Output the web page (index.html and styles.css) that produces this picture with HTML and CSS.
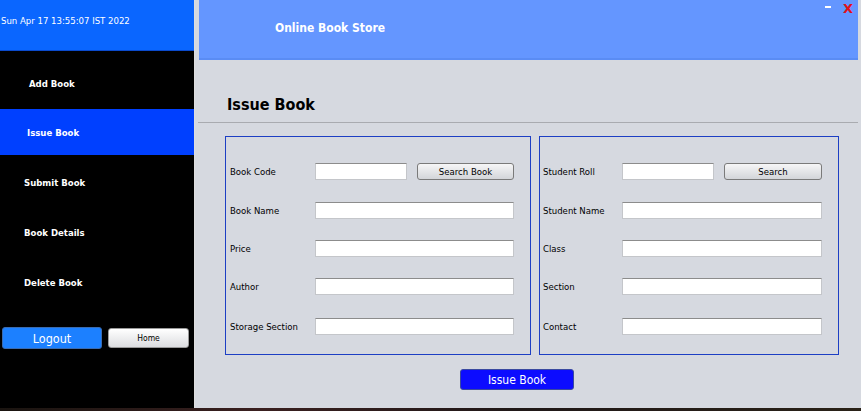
FILE: index.html
```html
<!DOCTYPE html>
<html>
<head>
<meta charset="utf-8">
<link rel="stylesheet" href="styles.css">
</head>
<body>
<div class="app">
  <aside class="sidebar">
    <div class="date">Sun Apr 17 13:55:07 IST 2022</div>
    <nav class="nav">
      <div class="nav-item first">Add Book</div>
      <div class="nav-item active">Issue Book</div>
      <div class="nav-item">Submit Book</div>
      <div class="nav-item">Book Details</div>
      <div class="nav-item">Delete Book</div>
    </nav>
    <div class="side-buttons">
      <button class="btn-logout">Logout</button>
      <button class="btn-home">Home</button>
    </div>
  </aside>
  <main class="main">
    <header class="header">
      <div class="title">Online Book Store</div>
      <span class="win-min"></span>
      <span class="win-close">X</span>
    </header>
    <h1 class="heading">Issue Book</h1>
    <div class="divider"></div>
    <div class="panels">
      <section class="panel panel-left">
        <div class="row first">
          <label class="lbl">Book Code</label>
          <input class="inp small" type="text">
          <button class="btn-search">Search Book</button>
        </div>
        <div class="row">
          <label class="lbl">Book Name</label>
          <input class="inp" type="text">
        </div>
        <div class="row">
          <label class="lbl">Price</label>
          <input class="inp" type="text">
        </div>
        <div class="row">
          <label class="lbl">Author</label>
          <input class="inp" type="text">
        </div>
        <div class="row last">
          <label class="lbl">Storage Section</label>
          <input class="inp" type="text">
        </div>
      </section>
      <section class="panel panel-right">
        <div class="row first">
          <label class="lbl">Student Roll</label>
          <input class="inp small" type="text">
          <button class="btn-search">Search</button>
        </div>
        <div class="row">
          <label class="lbl">Student Name</label>
          <input class="inp" type="text">
        </div>
        <div class="row">
          <label class="lbl">Class</label>
          <input class="inp" type="text">
        </div>
        <div class="row">
          <label class="lbl">Section</label>
          <input class="inp" type="text">
        </div>
        <div class="row last">
          <label class="lbl">Contact</label>
          <input class="inp" type="text">
        </div>
      </section>
    </div>
    <div class="actions">
      <button class="btn-issue">Issue Book</button>
    </div>
  </main>
</div>
<div class="desktop-strip"></div>
</body>
</html>
```
FILE: styles.css
```css
* { box-sizing: border-box; }
html, body {
  margin: 0;
  padding: 0;
  width: 861px;
  height: 411px;
  overflow: hidden;
  background: #1a1410;
  font-family: "DejaVu Sans Condensed", "DejaVu Sans", sans-serif;
}
.app {
  display: flex;
  width: 861px;
  height: 408px;
}
.sidebar {
  width: 194px;
  background: #000;
  display: flex;
  flex-direction: column;
}
.date {
  height: 51px;
  background: #0a66ff;
  color: #fff;
  font-size: 9.5px;
  padding: 15px 0 0 1px;
  border-bottom: 1px solid #0a4acc;
}
.nav {
  display: flex;
  flex-direction: column;
}
.nav-item {
  height: 50px;
  display: flex;
  align-items: center;
  padding-left: 24px;
  color: #fff;
  font-weight: bold;
  font-size: 9.5px;
}
.nav-item.first {
  margin-top: 7px;
  padding-left: 29px;
  height: 51px;
}
.nav-item.active {
  height: 46px;
  background: #0040ff;
  padding-left: 27px;
  margin-bottom: 2px;
}
.side-buttons {
  display: flex;
  align-items: center;
  gap: 6px;
  padding-left: 2px;
  margin-top: 20px;
}
.btn-logout {
  width: 100px;
  height: 22px;
  background: #1c80ff;
  border: 1px solid #3a6bb0;
  border-radius: 3px;
  color: #fff;
  font-family: inherit;
  font-size: 12.5px;
  padding: 0;
}
.btn-home {
  width: 81px;
  height: 20px;
  background: linear-gradient(#ffffff, #dcdde0);
  border: 1px solid #9a9a9a;
  border-radius: 3px;
  color: #000;
  font-family: inherit;
  font-size: 8.5px;
  padding: 0;
}
.main {
  flex: 1;
  background: #d6d9e0;
  border-left: 1px solid #dedede;
  display: flex;
  flex-direction: column;
  position: relative;
}
.header {
  margin: 0 3px 0 4px;
  height: 60px;
  background: #6496ff;
  border-bottom: 2px solid #5a8cf4;
  display: flex;
  align-items: center;
  padding: 0 0 3px 76px;
  position: relative;
}
.title {
  color: #fff;
  font-weight: bold;
  font-size: 12px;
}
.win-min {
  position: absolute;
  top: 6px;
  right: 27px;
  width: 6px;
  height: 2px;
  background: #fff;
}
.win-close {
  position: absolute;
  top: 1px;
  right: 5px;
  color: #e0101a;
  font-weight: bold;
  font-size: 13px;
  font-family: "DejaVu Sans", sans-serif;
}
.heading {
  margin: 35px 0 0 32px;
  font-size: 16px;
  font-weight: bold;
  color: #000;
  line-height: 20px;
}
.divider {
  margin: 7px 3px 0 3px;
  height: 1px;
  background: #a9abb0;
}
.panels {
  display: flex;
  gap: 8px;
  margin: 13px 0 0 30px;
}
.panel {
  border: 1px solid #1d3fc4;
  display: flex;
  flex-direction: column;
  gap: 21px;
  padding: 26px 16px 19px 4px;
}
.panel-left { width: 306px; }
.panel-right { width: 300px; padding-left: 3px; }
.row {
  display: flex;
  align-items: center;
  height: 17px;
}
.row.first { margin-bottom: 1px; }
.row.last { margin-top: 2px; }
.lbl {
  flex: 0 0 auto;
  font-size: 9.5px;
  color: #000;
}
.panel-left .lbl { width: 85px; }
.panel-right .lbl { width: 79px; }
.inp {
  flex: 1 1 0;
  min-width: 0;
  width: 0;
  height: 17px;
  background: #fff;
  border: 1px solid #c4c6ca;
  border-top-color: #8c8c8c;
  padding: 0;
  margin: 0;
}
.inp.small {
  flex: 0 0 92px;
  margin-right: 10px;
}
.btn-search {
  flex: 1 1 0;
  min-width: 0;
  height: 17px;
  background: linear-gradient(#f6f6f7, #d3d5d9);
  border: 1px solid #7a7a7a;
  border-radius: 3px;
  font-family: inherit;
  font-size: 9.5px;
  color: #000;
  padding: 0;
  white-space: nowrap;
}
.actions {
  display: flex;
  padding-left: 265px;
  margin-top: 14px;
}
.btn-issue {
  width: 114px;
  height: 21px;
  background: #0c0cff;
  border: 1px solid #3a4aa0;
  border-radius: 3px;
  color: #fff;
  font-family: inherit;
  font-size: 12px;
  padding: 0;
}
.desktop-strip {
  height: 3px;
  background: linear-gradient(90deg, #1a1410, #3a2020 30%, #201818 60%, #2a2218);
}
```
